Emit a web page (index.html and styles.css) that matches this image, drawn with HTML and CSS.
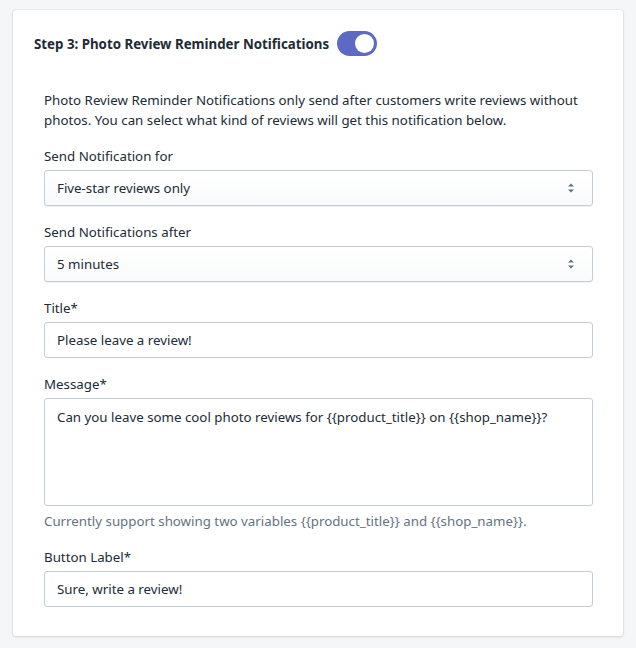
FILE: index.html
```html
<!DOCTYPE html>
<html>
<head>
<meta charset="utf-8">
<link rel="stylesheet" href="styles.css">
</head>
<body>
<div class="card">
  <div class="header">
    <h2 class="title">Step 3: Photo Review Reminder Notifications</h2>
    <span class="toggle"><span class="knob"></span></span>
  </div>
  <div class="body">
    <p class="intro">Photo Review Reminder Notifications only send after customers write reviews without photos. You can select what kind of reviews will get this notification below.</p>
    <div class="field">
      <label class="label">Send Notification for</label>
      <div class="select">
        <span>Five-star reviews only</span>
        <svg class="arrows" width="8" height="12" viewBox="0 0 8 12"><path d="M4 1.5L7 4.5H1Z M4 10.5L1 7.5H7Z" fill="#637381"/></svg>
      </div>
    </div>
    <div class="field">
      <label class="label">Send Notifications after</label>
      <div class="select">
        <span>5 minutes</span>
        <svg class="arrows" width="8" height="12" viewBox="0 0 8 12"><path d="M4 1.5L7 4.5H1Z M4 10.5L1 7.5H7Z" fill="#637381"/></svg>
      </div>
    </div>
    <div class="field">
      <label class="label">Title*</label>
      <div class="input">Please leave a review!</div>
    </div>
    <div class="field">
      <label class="label">Message*</label>
      <div class="input textarea">Can you leave some cool photo reviews for {{product_title}} on {{shop_name}}?</div>
      <div class="help">Currently support showing two variables {{product_title}} and {{shop_name}}.</div>
    </div>
    <div class="field">
      <label class="label">Button Label*</label>
      <div class="input">Sure, write a review!</div>
    </div>
  </div>
</div>
</body>
</html>
```
FILE: styles.css
```css
html, body {
  margin: 0;
  padding: 0;
  background: #f4f6f8;
}
body {
  padding: 10px 13px 12px 13px;
  font-family: "Noto Sans", "Open Sans", sans-serif;
  font-size: 13.3px;
  line-height: 20px;
  color: #212b36;
}
.card {
  background: #fff;
  border-radius: 3px;
  box-shadow: 0 0 0 1px rgba(63,63,68,0.05), 0 1px 3px 0 rgba(63,63,68,0.15);
  padding: 20px 30px 29px 31px;
}
.header {
  display: flex;
  align-items: center;
  gap: 8px;
  margin-left: -10px;
  height: 25px;
  margin-top: 1px;
}
.title {
  margin: 0;
  font-size: 13.3px;
  font-weight: 700;
  line-height: 20px;
}
.toggle {
  width: 40px;
  height: 25px;
  border-radius: 13px;
  background: #5c6ac4;
  position: relative;
  display: inline-block;
}
.knob {
  position: absolute;
  right: 3px;
  top: 3px;
  width: 19px;
  height: 19px;
  border-radius: 50%;
  background: #fff;
}
.body {
  margin-top: 34px;
}
.intro {
  margin: 0;
}
.field {
  margin-top: 16px;
}
.label {
  display: block;
  margin-bottom: 4px;
}
.select, .input {
  box-sizing: border-box;
  border: 1px solid #c4cdd5;
  border-radius: 3px;
  padding: 7px 12px;
  height: 36px;
  line-height: 20px;
}
.select {
  display: flex;
  align-items: center;
  justify-content: space-between;
  background: linear-gradient(to bottom, #ffffff, #f9fafb);
  box-shadow: 0 1px 0 0 rgba(22,29,37,0.05);
  padding-right: 17px;
}
.input {
  background: #fff;
}
.textarea {
  height: 108px;
  padding-top: 8px;
}
.help {
  color: #637381;
  margin-top: 5px;
}
```
